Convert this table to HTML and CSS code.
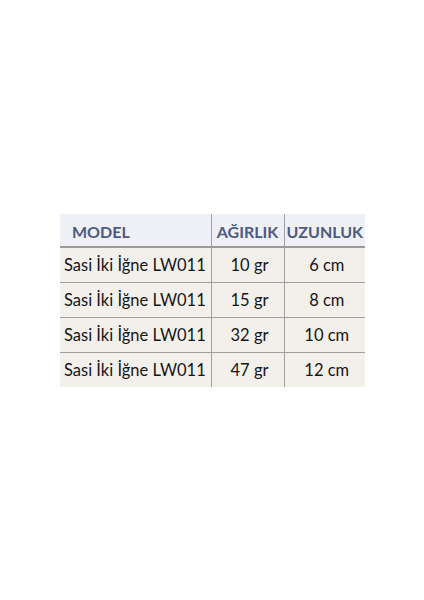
FILE: index.html
```html
<!DOCTYPE html>
<html>
<head>
<meta charset="utf-8">
<link rel="stylesheet" href="styles.css">
</head>
<body>
<table class="spec">
  <thead>
    <tr><th class="c-model">MODEL</th><th class="c-w">AĞIRLIK</th><th class="c-l">UZUNLUK</th></tr>
  </thead>
  <tbody>
    <tr><td class="c-model">Sasi İki İğne LW011</td><td class="c-w">10 gr</td><td class="c-l">6 cm</td></tr>
    <tr><td class="c-model">Sasi İki İğne LW011</td><td class="c-w">15 gr</td><td class="c-l">8 cm</td></tr>
    <tr><td class="c-model">Sasi İki İğne LW011</td><td class="c-w">32 gr</td><td class="c-l">10 cm</td></tr>
    <tr><td class="c-model">Sasi İki İğne LW011</td><td class="c-w">47 gr</td><td class="c-l">12 cm</td></tr>
  </tbody>
</table>
</body>
</html>
```
FILE: styles.css
```css
html, body { margin: 0; padding: 0; background: #fff; }
body { padding-top: 214px; padding-left: 60px; }
.spec {
  border-collapse: collapse;
  font-family: Lato, "Open Sans", sans-serif;
  font-size: 16.5px;
  color: #151515;
  table-layout: fixed;
  width: 305px;
}
.spec th, .spec td { box-sizing: border-box; padding: 0; white-space: nowrap; overflow: hidden; }
.spec th {
  height: 33px;
  padding-top: 2px;
  background: #eef0f6;
  color: #4d5a80;
  font-size: 16px;
  font-weight: bold;
  border-bottom: 2px solid #9a9a9a;
  text-align: center;
}
.spec th.c-model { text-align: left; padding-left: 12px; }
.spec td {
  height: 35px;
  background: #f3f0ec;
  border-bottom: 1px solid #a0a0a0;
  text-align: center;
}
.spec tbody tr:last-child td { border-bottom: none; }
.spec .c-model { width: 151px; }
.spec td.c-model { text-align: left; padding-left: 4px; }
.spec .c-w { width: 73px; border-left: 1px solid #a0a0a0; }
.spec .c-l { width: 81px; border-left: 1px solid #a0a0a0; }
.spec td.c-w { padding-left: 4px; }
.spec td.c-l { padding-left: 4px; }
```
